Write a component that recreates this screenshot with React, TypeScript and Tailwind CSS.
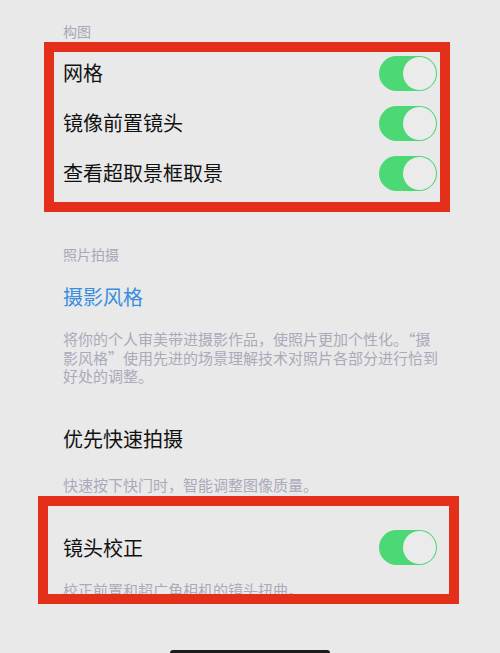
const cjk = "font-['Noto_Sans_CJK_SC','Noto_Sans',sans-serif]";

function Toggle() {
  return (
    <div className="flex h-[35px] w-[58px] items-center justify-end rounded-full bg-[#4cd874] p-[1px]">
      <div className="h-[33px] w-[33px] rounded-full bg-[#ebebeb]" />
    </div>
  );
}

function SwitchRow({ label }: { label: string }) {
  return (
    <div className="flex h-[50px] w-[374px] items-center justify-between">
      <span className="text-[20px] leading-[30px] text-[#111111]">{label}</span>
      <Toggle />
    </div>
  );
}

function Header({ children, className = "" }: { children: string; className?: string }) {
  return <div className={`h-[22px] text-[14px] leading-[22px] text-[#a8a8b6] ${className}`}>{children}</div>;
}

function Note({ children, className = "" }: { children: React.ReactNode; className?: string }) {
  return <div className={`text-[15px] leading-[18.5px] text-[#aaaaba] ${className}`}>{children}</div>;
}

export default function App() {
  return (
    <div className={`relative h-[653px] w-[500px] overflow-hidden bg-[#e9e9e9] ${cjk}`}>
      <div className="flex flex-col pl-[63px] pt-[20px]">
        <Header>构图</Header>
        <div className="mt-[6px] flex flex-col">
          <SwitchRow label="网格" />
          <SwitchRow label="镜像前置镜头" />
          <SwitchRow label="查看超取景框取景" />
        </div>

        <Header className="mt-[45px]">照片拍摄</Header>
        <div className="mt-[17px] h-[30px] text-[20px] leading-[30px] text-[#3a8ee0]">摄影风格</div>
        <Note className="mt-[18px] w-[390px]">
          将你的个人审美带进摄影作品，使照片更加个性化。“摄
          <br />
          影风格”使用先进的场景理解技术对照片各部分进行恰到
          <br />
          好处的调整。
        </Note>

        <div className="mt-[38px] h-[30px] text-[20px] leading-[30px] text-[#111111]">优先快速拍摄</div>
        <Note className="mt-[20px] h-[22px] leading-[22px]">快速按下快门时，智能调整图像质量。</Note>

        <div className="mt-[27px]">
          <SwitchRow label="镜头校正" />
        </div>
        <Note className="mt-[6px] h-[22px] leading-[22px]">校正前置和超广角相机的镜头扭曲。</Note>
      </div>

      {/* annotation frames drawn over the settings */}
      <div className="absolute left-[44px] top-[42px] h-[170px] w-[406px] border-[10px] border-[#e4301b]" />
      <div className="absolute left-[38px] top-[496px] h-[108px] w-[421px] border-[10px] border-[#e4301b]" />

      {/* home indicator */}
      <div className="absolute left-[170px] top-[650px] h-[6px] w-[160px] rounded-full bg-[#1c1c1c]" />
    </div>
  );
}
